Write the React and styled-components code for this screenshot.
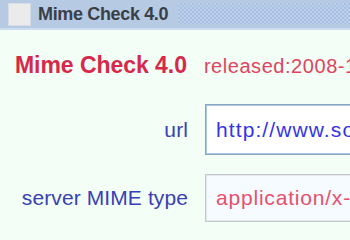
import React from "react"
import styled, { createGlobalStyle } from "styled-components"

const Global = createGlobalStyle`
  html, body {
    margin: 0;
    padding: 0;
    background: #f2fef6;
    overflow: hidden;
  }
  body {
    width: 350px;
    height: 240px;
    font-family: "Liberation Sans", Arial, sans-serif;
  }
`

const Window = styled.div`
  width: 350px;
  height: 240px;
  overflow: hidden;
  background: #f2fef6;
`

const TitleBar = styled.div`
  display: flex;
  align-items: center;
  height: 28px;
  background: #b6cae3;
  border-bottom: 2px solid #cddcee;
  padding-left: 8px;
  gap: 7px;
`

const Box = styled.div`
  width: 21px;
  height: 21px;
  background: #ebebeb;
  border: 1px solid #d6dde6;
  flex: none;
`

const TitleText = styled.div`
  font-weight: bold;
  font-size: 18px;
  letter-spacing: -0.35px;
  color: #3a3f47;
  white-space: nowrap;
`

const Dither = styled.div`
  flex: 1;
  align-self: stretch;
  margin: 3px 0 4px 3px;
  background-color: #bcd0ea;
  background-image: conic-gradient(#a8c0e3 25%, transparent 0 50%, #a8c0e3 0 75%, transparent 0);
  background-size: 4px 4px;
`

const Content = styled.div`
  padding: 24px 0 0 15px;
`

const Heading = styled.div`
  display: flex;
  align-items: baseline;
  gap: 17px;
  white-space: nowrap;
  line-height: 23px;
`

const Name = styled.span`
  font-weight: bold;
  font-size: 23px;
  letter-spacing: -0.05px;
  color: #d8284a;
`

const Released = styled.span`
  font-size: 20px;
  letter-spacing: 0.55px;
  color: #e0445e;
`

const Form = styled.div`
  display: grid;
  grid-template-columns: 173px auto;
  column-gap: 17px;
  row-gap: 19px;
  margin-top: 26px;
  align-items: center;
`

const Label = styled.div`
  text-align: right;
  font-size: 21px;
  letter-spacing: 0.1px;
  color: #3a40b4;
  white-space: nowrap;
`

const Field = styled.div`
  width: 200px;
  height: ${p => p.$h}px;
  box-sizing: border-box;
  display: flex;
  align-items: center;
  padding-left: 10px;
  font-size: 21px;
  letter-spacing: ${p => p.$spacing}px;
  white-space: nowrap;
  overflow: hidden;
  color: ${p => p.$color};
  background: ${p => p.$bg};
  border: 1px solid ${p => p.$border};
  border-right: none;
  box-shadow: inset 1px 1px 0 ${p => p.$inner}, inset -1px -1px 0 ${p => p.$inner};
`

export default function App() {
  return (
    <Window>
      <Global />
      <TitleBar>
        <Box />
        <TitleText>Mime Check 4.0</TitleText>
        <Dither />
      </TitleBar>
      <Content>
        <Heading>
          <Name>Mime Check 4.0</Name>
          <Released>released:2008-10-01</Released>
        </Heading>
        <Form>
          <Label>url</Label>
          <Field $h={51} $spacing={1.1} $color="#3535e8" $bg="#ffffff" $border="#8ea4bc" $inner="#a9c6e6">
            http://www.someurl.com
          </Field>
          <Label>server MIME type</Label>
          <Field $h={48} $spacing={0.8} $color="#e8506c" $bg="#f6fbff" $border="#c4c8cc" $inner="#e4e8ec">
            application/x-shockwave
          </Field>
        </Form>
      </Content>
    </Window>
  )
}
